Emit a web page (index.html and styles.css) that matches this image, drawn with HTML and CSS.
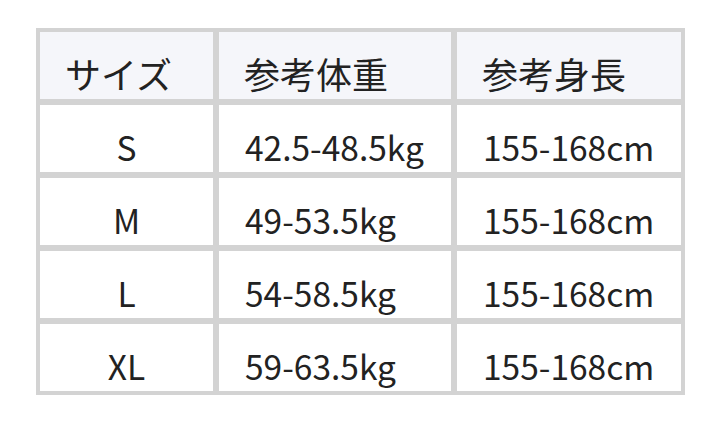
FILE: index.html
```html
<!DOCTYPE html>
<html lang="ja">
<head>
<meta charset="utf-8">
<link rel="stylesheet" href="styles.css">
</head>
<body>
<div class="size-table">
  <div class="cell head">サイズ</div>
  <div class="cell head">参考体重</div>
  <div class="cell head">参考身長</div>

  <div class="cell size">S</div>
  <div class="cell">42.5-48.5kg</div>
  <div class="cell">155-168cm</div>

  <div class="cell size">M</div>
  <div class="cell">49-53.5kg</div>
  <div class="cell">155-168cm</div>

  <div class="cell size">L</div>
  <div class="cell">54-58.5kg</div>
  <div class="cell">155-168cm</div>

  <div class="cell size">XL</div>
  <div class="cell">59-63.5kg</div>
  <div class="cell">155-168cm</div>
</div>
</body>
</html>
```
FILE: styles.css
```css
html, body {
  margin: 0;
  padding: 0;
  background: #ffffff;
}
body {
  font-family: "Noto Sans CJK JP", "Noto Sans", sans-serif;
  color: #222222;
}
.size-table {
  margin: 28px 0 0 36px;
  width: 649px;
  box-sizing: border-box;
  display: grid;
  grid-template-columns: 173px 232px 224px;
  grid-auto-rows: 67px;
  gap: 6px;
  padding: 4px;
  background: #d3d3d3;
}
.cell {
  background: #ffffff;
  font-size: 33.5px;
  line-height: 49px;
  padding: 17px 0 0 26px;
  box-sizing: border-box;
  white-space: nowrap;
}
.cell.head {
  background: #f5f6fa;
  font-size: 36px;
  padding-left: 25px;
}
.cell.size {
  padding-left: 0;
  text-align: center;
}
```
